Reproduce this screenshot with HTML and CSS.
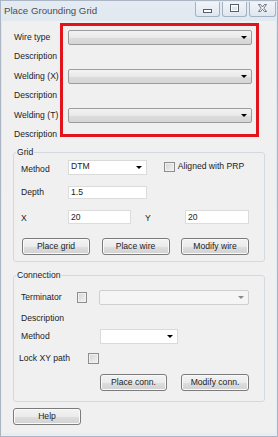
FILE: index.html
```html
<!DOCTYPE html>
<html lang="en">
<head>
    <meta charset="UTF-8">
    <meta name="viewport" content="width=device-width, initial-scale=1.0">
    <title>Place Grounding Grid</title>
    <link rel="stylesheet" href="styles.css">
</head>
<body>
    <div class="window">
        <div class="titlebar">
            <span class="title">Place Grounding Grid</span>
            <div class="caption">
                <span class="cap-btn cap-min">
                    <svg width="25" height="15" viewBox="0 0 25 15"><rect x="8.5" y="8.5" width="8" height="3" fill="#fff" stroke="#56606c"/></svg>
                </span>
                <span class="cap-btn cap-max">
                    <svg width="25" height="15" viewBox="0 0 25 15"><rect x="8.5" y="3.5" width="8" height="7" fill="#fff" stroke="#56606c"/><rect x="10" y="5.5" width="5" height="3.5" fill="#dfe6ee"/></svg>
                </span>
                <span class="cap-btn cap-close">
                    <svg width="27" height="15" viewBox="0 0 27 15"><path d="M9.5 3.5 L11.5 3.5 L13.5 6 L15.5 3.5 L17.5 3.5 L14.8 7.2 L17.5 10.5 L15.5 10.5 L13.5 8.3 L11.5 10.5 L9.5 10.5 L12.2 7.2 Z" fill="#fff" stroke="#5a6470" stroke-width="0.9"/></svg>
                </span>
            </div>
        </div>

        <div class="client">
            <!-- cadre rouge d'annotation -->
            <div class="highlight"></div>

            <div class="top-fields">
                <div class="row"><span class="lbl lbl-top">Wire type</span><span class="combo combo-wide"><i class="arrow"></i></span></div>
                <div class="row"><span class="lbl lbl-top">Description</span></div>
                <div class="row"><span class="lbl lbl-top">Welding (X)</span><span class="combo combo-wide"><i class="arrow"></i></span></div>
                <div class="row"><span class="lbl lbl-top">Description</span></div>
                <div class="row"><span class="lbl lbl-top">Welding (T)</span><span class="combo combo-wide"><i class="arrow"></i></span></div>
                <div class="row"><span class="lbl lbl-top">Description</span></div>
            </div>

            <fieldset class="group group-grid">
                <legend>Grid</legend>
                <div class="g-row g-method">
                    <span class="lbl lbl-grid lbl-low">Method</span>
                    <span class="combo combo-edit combo-dtm">DTM<i class="arrow"></i></span>
                    <span class="check check-aligned"></span>
                    <span class="check-text">Aligned with PRP</span>
                </div>
                <div class="g-row g-depth">
                    <span class="lbl lbl-grid">Depth</span>
                    <span class="field field-depth">1.5</span>
                </div>
                <div class="g-row g-xy">
                    <span class="lbl lbl-grid lbl-xy">X</span>
                    <span class="field field-x">20</span>
                    <span class="lbl lbl-y lbl-xy">Y</span>
                    <span class="field field-y">20</span>
                </div>
                <div class="g-row g-buttons">
                    <span class="btn">Place grid</span>
                    <span class="btn">Place wire</span>
                    <span class="btn">Modify wire</span>
                </div>
            </fieldset>

            <fieldset class="group group-conn">
                <legend>Connection</legend>
                <div class="c-row c-term">
                    <span class="lbl lbl-term">Terminator</span>
                    <span class="check"></span>
                    <span class="combo combo-disabled combo-term"><i class="arrow"></i></span>
                </div>
                <div class="c-row c-desc">
                    <span class="lbl">Description</span>
                </div>
                <div class="c-row c-method">
                    <span class="lbl lbl-cmethod">Method</span>
                    <span class="combo combo-edit combo-cmethod"><i class="arrow"></i></span>
                </div>
                <div class="c-row c-lock">
                    <span class="lbl lbl-lock">Lock XY path</span>
                    <span class="check"></span>
                </div>
                <div class="c-row c-buttons">
                    <span class="btn btn-conn">Place conn.</span>
                    <span class="btn">Modify conn.</span>
                </div>
            </fieldset>

            <div class="help-row">
                <span class="btn">Help</span>
            </div>
        </div>
    </div>
</body>
</html>
```

FILE: styles.css
```css
body {
    margin: 0;
    padding: 0;
    background-color: #ffffff;
    font-family: "Liberation Sans", Arial, sans-serif;
    font-size: 8.6px;
    color: #222;
}
.window {
    width: 278px;
    height: 437px;
    box-sizing: border-box;
    border: 1px solid #aab6c3;
    padding: 0 1px 3px 1px;
    background: linear-gradient(#e4ebf2, #dde6ef 40px, #e6edf4);
}
.titlebar {
    height: 20px;
    display: flex;
    justify-content: space-between;
    align-items: flex-start;
}
.title {
    padding-left: 2px;
    margin-top: 4px;
    font-size: 9.7px;
    line-height: 11px;
    color: #4d4d4d;
}
.caption {
    display: flex;
    gap: 2px;
    padding-top: 1px;
}
.cap-btn {
    display: block;
    width: 25px;
    height: 15px;
    box-sizing: border-box;
    border: 1px solid #a3b1c1;
    border-top: none;
    border-radius: 0 0 3px 3px;
    background: linear-gradient(#f1f5f9, #dfe7ef);
    overflow: hidden;
}
.cap-btn svg {
    display: block;
    margin-left: -1px;
    margin-top: -1px;
}
.cap-close {
    width: 27px;
}
.client {
    position: relative;
    height: 412px;
    box-sizing: border-box;
    background-color: #f0f0f0;
    padding-left: 11px;
}
.highlight {
    position: absolute;
    left: 58px;
    top: 2px;
    width: 199px;
    height: 114px;
    box-sizing: border-box;
    border: 3.5px solid #e3131c;
}
.lbl {
    display: block;
    line-height: 11px;
    white-space: nowrap;
}
.top-fields {
    padding-top: 6.5px;
    padding-left: 1px;
}
.row {
    height: 19.5px;
    display: flex;
    align-items: center;
}
.lbl-top {
    width: 54px;
}
.combo {
    display: flex;
    align-items: center;
    justify-content: space-between;
    box-sizing: border-box;
    height: 15px;
    padding: 0 4px 0 2px;
    border: 1px solid #9c9c9c;
    border-radius: 2px;
    background: linear-gradient(#f3f3f3, #e9e9e9 50%, #dcdcdc 51%, #d6d6d6);
}
.combo-wide {
    width: 184px;
}
.arrow {
    display: block;
    margin-left: auto;
    width: 0;
    height: 0;
    border-left: 3px solid transparent;
    border-right: 3px solid transparent;
    border-top: 3px solid #000;
}
.combo-edit {
    background: #fff;
    border: 1px solid #dadada;
    border-radius: 0;
    align-items: flex-start;
    line-height: 11px;
}
.combo-edit .arrow {
    margin-top: 5px;
}
.combo-disabled {
    background: #f5f5f5;
    border: 1px solid #cfcfcf;
}
.combo-disabled .arrow {
    border-top-color: #8a8a8a;
}
.group {
    margin: 0;
    width: 252px;
    min-width: 0;
    box-sizing: border-box;
    border: 1px solid #d3d9de;
    border-radius: 3px;
    padding: 0 7px 6px 7px;
}
.group legend {
    padding: 0 1px;
    margin-left: -5px;
    line-height: 11px;
}
.group-grid {
    margin-top: 2.3px;
}
.g-row {
    display: flex;
}
.lbl-grid {
    width: 47px;
}
.g-method {
    margin-top: 2.7px;
    height: 15px;
    align-items: flex-start;
}
.lbl-low {
    padding-top: 4px;
}
.combo-dtm {
    width: 79px;
}
.check {
    display: block;
    width: 10.5px;
    height: 10.5px;
    box-sizing: border-box;
    border: 1px solid #8e8e8e;
    background: linear-gradient(135deg, #d4d4d4, #f4f4f4);
    box-shadow: inset 0 0 0 1px #f0f0f0;
}
.check-aligned {
    margin-left: 17.3px;
    margin-top: 1.2px;
}
.check-text {
    margin-left: 3px;
    margin-top: 0.7px;
    line-height: 11px;
    white-space: nowrap;
}
.field {
    display: block;
    box-sizing: border-box;
    background: #fff;
    border: 1px solid #dcdcdc;
    padding-left: 2px;
}
.g-depth {
    margin-top: 10.5px;
    height: 13px;
    align-items: center;
}
.field-depth {
    width: 79px;
    height: 13px;
    line-height: 11px;
}
.g-xy {
    margin-top: 11px;
    height: 14px;
    align-items: flex-start;
}
.lbl-xy {
    padding-top: 3px;
}
.field-x,
.field-y {
    width: 63px;
    height: 14px;
    line-height: 12px;
}
.lbl-y {
    margin-left: 14px;
    width: 40px;
}
.field-y {
    width: 64px;
}
.g-buttons {
    margin-top: 13.7px;
    margin-left: 1px;
    gap: 11.5px;
}
.btn {
    display: block;
    width: 68px;
    height: 17px;
    box-sizing: border-box;
    border: 1px solid #7b7b7b;
    border-radius: 3px;
    background: linear-gradient(#f3f3f3, #ebebeb 50%, #dedede 51%, #d2d2d2);
    box-shadow: inset 0 0 0 1px #fafafa;
    text-align: center;
    line-height: 15px;
    white-space: nowrap;
}
.group-conn {
    margin-top: 8.8px;
    padding-bottom: 9.4px;
}
.c-row {
    display: flex;
    align-items: center;
}
.c-term {
    margin-top: 8.5px;
    height: 15px;
}
.lbl-term {
    width: 55.7px;
}
.combo-term {
    margin-left: 12.3px;
    width: 150px;
}
.c-desc {
    margin-top: 7.8px;
    height: 11px;
}
.c-method {
    margin-top: 5.7px;
    height: 15px;
}
.lbl-cmethod {
    width: 79px;
}
.combo-cmethod {
    width: 78px;
}
.c-lock {
    margin-top: 8.2px;
    height: 11px;
}
.lbl-lock {
    margin-left: -2px;
    width: 69.3px;
}
.c-lock .check {
    width: 11px;
    height: 11px;
}
.c-buttons {
    margin-top: 10.6px;
    margin-left: 79px;
    gap: 14px;
}
.btn-conn {
    width: 67px;
}
.help-row {
    margin-top: 6px;
    display: flex;
}
```
